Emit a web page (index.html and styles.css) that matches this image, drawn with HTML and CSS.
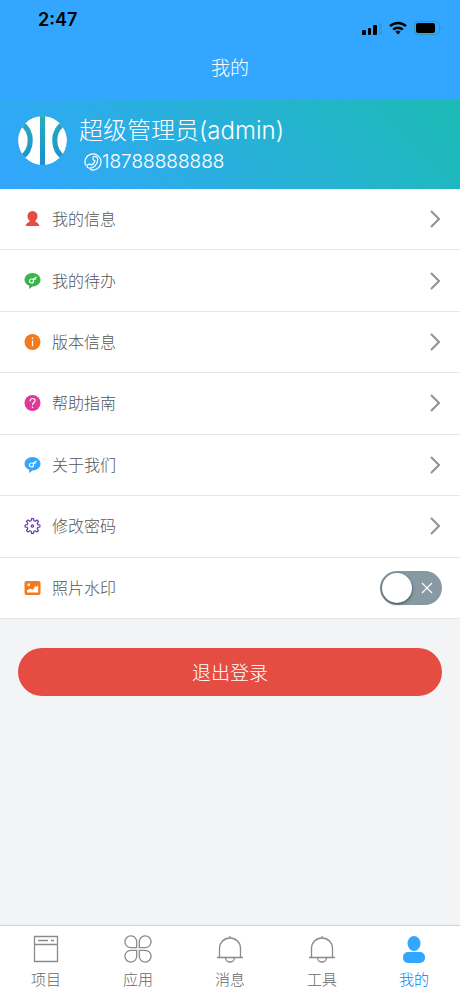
FILE: index.html
```html
<!DOCTYPE html>
<html lang="zh-CN">
<head>
    <meta charset="UTF-8">
    <meta name="viewport" content="width=device-width, initial-scale=1.0">
    <title>我的</title>
    <link rel="stylesheet" href="styles.css">
</head>
<body>
    <header class="header">
        <div class="status-bar">
            <span class="time">2:47</span>
            <div class="status-icons">
                <svg width="20" height="14" viewBox="0 0 20 14">
                    <rect x="0" y="9" width="4" height="5" rx="1"/>
                    <rect x="6" y="7" width="3" height="7" rx="1"/>
                    <rect x="11" y="4" width="4" height="10" rx="1"/>
                    <rect x="17" y="2" width="3" height="12" rx="1" fill="#2f9fd8"/>
                </svg>
                <svg width="18" height="14" viewBox="0 0 18 14" fill="none" stroke="#000" stroke-width="2.5">
                    <path d="M1 5.2a11.5 11.5 0 0 1 16 0"/>
                    <path d="M4.2 8.6a7 7 0 0 1 9.6 0"/>
                    <path d="M6.4 10.8a3.8 3.8 0 0 1 5.2 0L9 13.6z" fill="#000" stroke="none"/>
                </svg>
                <svg width="29" height="14" viewBox="0 0 29 14">
                    <rect x="0.5" y="0.5" width="25" height="13" rx="3.5" fill="none" stroke="#2d98b8"/>
                    <rect x="2" y="2" width="19" height="10" rx="2"/>
                    <path d="M27 5v4c1.500-.5 1.500-3.500 0-4z" fill="#2d98b8"/>
                </svg>
            </div>
        </div>
        <h1 class="title">我的</h1>
    </header>

    <section class="profile">
        <svg class="avatar" viewBox="0 0 48 48">
            <defs>
                <clipPath id="ball"><circle cx="24" cy="24" r="24"/></clipPath>
                <linearGradient id="seam" gradientUnits="userSpaceOnUse" x1="0" y1="0" x2="0" y2="48">
                    <stop offset="0" stop-color="#28adb8"/>
                    <stop offset="1" stop-color="#1790d6"/>
                </linearGradient>
            </defs>
            <g clip-path="url(#ball)">
                <circle cx="24" cy="24" r="24" fill="#fff"/>
                <g fill="none" stroke="url(#seam)" stroke-width="5">
                    <path d="M21.500 0h5v48h-5z" fill="url(#seam)" stroke="none"/>
                    <path d="M3 7c12 8 12 26 0 34"/>
                    <path d="M45 7c-12 8-12 26 0 34"/>
                </g>
            </g>
        </svg>
        <div class="profile-info">
            <p class="name">超级管理员(admin)</p>
            <p class="phone">
                <svg width="18" height="18" viewBox="0 0 18 18" fill="none" stroke="#fff" stroke-width="1.2" stroke-linejoin="round">
                    <path d="M1.800 12.500A8 8 0 1 1 6 16.400"/>
                    <path d="M9.500 3.500c2.500-.6 4.400.8 4.200 3.400-.3 4.400-3.600 8-7.700 8.300-1.800.1-3-.9-3-2.200 0-1 .7-1.500 1.600-1.700l1.300-.2c.8-.1 1.200.4 1.300 1.100 2-.7 3.400-2.500 3.700-4.700-1 .1-1.600-.4-1.800-1.300-.2-1.200-.3-2.400.4-2.700z"/>
                </svg>18788888888
            </p>
        </div>
    </section>

    <main class="main">
        <ul class="menu">
            <li>
                <a class="menu-item" href="#info">
                    <svg class="icon" viewBox="0 0 16 16" fill="#e54d42">
                        <path d="M8 0a5 5 0 0 1 5 5.200c0 2-1 3.700-2.300 4.700.2 1.200 3.800 1.500 4.100 5.100H1.200c.3-3.600 3.900-3.900 4.100-5.100C4 8.900 3 7.200 3 5.200A5 5 0 0 1 8 0z"/>
                    </svg>
                    <span class="label">我的信息</span>
                    <svg class="arrow" viewBox="0 0 10 18"><path d="M1 1l8 8-8 8"/></svg>
                </a>
            </li>
            <li>
                <a class="menu-item" href="#todo">
                    <svg class="icon" viewBox="0 0 16 16">
                        <path d="M8 0c4.500 0 8 3 8 6.800s-3.500 6.700-8 6.700L4.500 16l.2-3.300C1.800 11.600 0 9.500 0 6.800 0 3 3.500 0 8 0z" fill="#39b54a"/>
                        <g fill="none" stroke="#fff" stroke-width="1.200"><circle cx="7" cy="8" r="2"/><path d="M8.400 6.600L12 4M10 5.400l1 1.600"/></g>
                    </svg>
                    <span class="label">我的待办</span>
                    <svg class="arrow" viewBox="0 0 10 18"><path d="M1 1l8 8-8 8"/></svg>
                </a>
            </li>
            <li>
                <a class="menu-item" href="#version">
                    <svg class="icon" viewBox="0 0 16 16">
                        <circle cx="8" cy="8" r="8" fill="#f37b1d"/>
                        <path d="M8 6.500v5.700M8 3.600v1.500" stroke="#fff" stroke-width="1.200"/>
                    </svg>
                    <span class="label">版本信息</span>
                    <svg class="arrow" viewBox="0 0 10 18"><path d="M1 1l8 8-8 8"/></svg>
                </a>
            </li>
            <li>
                <a class="menu-item" href="#help">
                    <svg class="icon" viewBox="0 0 16 16">
                        <circle cx="8" cy="8" r="8" fill="#e03997"/>
                        <path d="M5.600 6.200c0-3.600 5-3.400 5-.6C10.600 7.500 8 7.600 8 10M8 11.600V13" fill="none" stroke="#fff" stroke-width="1.200"/>
                    </svg>
                    <span class="label">帮助指南</span>
                    <svg class="arrow" viewBox="0 0 10 18"><path d="M1 1l8 8-8 8"/></svg>
                </a>
            </li>
            <li>
                <a class="menu-item" href="#about">
                    <svg class="icon" viewBox="0 0 16 16">
                        <path d="M8 0c4.500 0 8 3 8 6.800s-3.500 6.700-8 6.700L4.500 16l.2-3.300C1.800 11.600 0 9.500 0 6.800 0 3 3.500 0 8 0z" fill="#33a6ff"/>
                        <g fill="none" stroke="#fff" stroke-width="1.200"><circle cx="7" cy="8" r="2"/><path d="M8.400 6.600L12 4M10 5.400l1 1.600"/></g>
                    </svg>
                    <span class="label">关于我们</span>
                    <svg class="arrow" viewBox="0 0 10 18"><path d="M1 1l8 8-8 8"/></svg>
                </a>
            </li>
            <li>
                <a class="menu-item" href="#password">
                    <svg class="icon" viewBox="0 0 16 16" fill="none" stroke="#6739b6" stroke-width="1.200" stroke-linejoin="round">
                        <path d="M6.700 2.700L7 .6h2l.3 2.100 1.400.6 1.800-1.300 1.500 1.500-1.300 1.800.6 1.400 2.100.3v2l-2.100.3-.6 1.400 1.300 1.800-1.500 1.500-1.800-1.300-1.400.6-.3 2.100H7l-.3-2.100-1.400-.6L3.500 14 2 12.500l1.300-1.800-.6-1.400L.6 9V7l2.100-.3.6-1.400L2 3.500 3.500 2l1.800 1.300z"/>
                        <circle cx="8" cy="8" r="1.200"/>
                    </svg>
                    <span class="label">修改密码</span>
                    <svg class="arrow" viewBox="0 0 10 18"><path d="M1 1l8 8-8 8"/></svg>
                </a>
            </li>
            <li>
                <label class="menu-item">
                    <svg class="icon" viewBox="0 0 16 16">
                        <rect x="0" y="1" width="16" height="14" rx="2" fill="#f37b1d"/>
                        <circle cx="4.300" cy="4.800" r="1.400" fill="#fff"/>
                        <path d="M2.500 12.500V10.300l3-1.600 3 1 2-3.500 1.500.6 1.700-1.300v7z" fill="#fff"/>
                    </svg>
                    <span class="label">照片水印</span>
                    <input class="switch-input" type="checkbox">
                    <span class="switch">
                        <span class="knob"></span>
                        <svg class="cross" viewBox="0 0 10 10"><path d="M0 0l10 10M10 0L0 10"/></svg>
                    </span>
                </label>
            </li>
        </ul>

        <button class="logout" type="button">退出登录</button>
    </main>

    <nav class="tab-bar">
        <a class="tab" href="#project">
            <svg viewBox="0 0 28 28">
                <path d="M2.500 1.500h23v25h-23zM2.500 9.500h23M6 5.500h10M19 5.500h3"/>
            </svg>
            <span>项目</span>
        </a>
        <a class="tab" href="#apps">
            <svg viewBox="0 0 28 28">
                <path d="M12.700 12.700V7.200a5.900 5.900 0 1 0-5.900 5.500zM15.300 12.700V7.200a5.900 5.900 0 1 1 5.900 5.500zM12.700 15.300v5.500a5.900 5.900 0 1 1-5.900-5.500zM15.300 15.300v5.500a5.900 5.900 0 1 0 5.900-5.500z"/>
            </svg>
            <span>应用</span>
        </a>
        <a class="tab" href="#message">
            <svg viewBox="0 0 28 28">
                <path d="M14 1v2M1 22.500h26M3.500 22.500V13.500a10.500 10.500 0 0 1 21 0v9M9.500 22.500a4.500 4.500 0 0 0 9 0"/>
            </svg>
            <span>消息</span>
        </a>
        <a class="tab" href="#tools">
            <svg viewBox="0 0 28 28">
                <path d="M14 1v2M1 22.500h26M3.500 22.500V13.500a10.500 10.500 0 0 1 21 0v9M9.500 22.500a4.500 4.500 0 0 0 9 0"/>
            </svg>
            <span>工具</span>
        </a>
        <a class="tab active" href="#me">
            <svg viewBox="0 0 28 28">
                <ellipse cx="14" cy="8.500" rx="6.500" ry="7.500"/>
                <rect x="3" y="17" width="22" height="11" rx="5"/>
            </svg>
            <span>我的</span>
        </a>
    </nav>
</body>
</html>
```
FILE: styles.css
```css
* {
    box-sizing: border-box;
}

body {
    display: flex;
    flex-direction: column;
    min-height: 100vh;
    margin: 0;
    background-color: #f2f4f6;
    font-family: Inter, "Noto Sans CJK SC", sans-serif;
    font-weight: 300;
    color: #555;
}

a {
    color: inherit;
    text-decoration: none;
}

.header {
    height: 100px;
    background-color: #33a6ff;
}

.status-bar {
    display: flex;
    justify-content: space-between;
    height: 44px;
    padding: 8px 17px 0 38px;
}

.time {
    font-size: 18px;
    font-weight: 600;
    line-height: 24px;
    color: #000;
}

.status-icons {
    display: flex;
    gap: 7px;
    padding-top: 13px;
}

.title {
    margin: 0;
    font-size: 19px;
    font-weight: 300;
    line-height: 50px;
    text-align: center;
    color: #fff;
}

.profile {
    display: flex;
    align-items: center;
    gap: 12px;
    height: 89px;
    padding: 0 18px;
    background: linear-gradient(45deg, #33a6ff, #1cbbb4);
    color: #fff;
}

.avatar {
    width: 49px;
    height: 49px;
    margin-bottom: 8px;
}

.profile-info p {
    margin: 0;
}

.name {
    font-size: 24px;
    line-height: 34px;
}

.phone {
    display: flex;
    align-items: center;
    padding-left: 5px;
    font-size: 19px;
    line-height: 28px;
}

.main {
    flex: 1;
}

.menu {
    display: grid;
    grid-auto-rows: 1fr;
    min-height: 430px;
    margin: 0;
    padding: 0;
    list-style: none;
    background-color: #fff;
}

.menu li {
    display: grid;
    border-bottom: 1px solid #e6e6e6;
}

.menu-item {
    display: flex;
    align-items: center;
    padding: 0 18px 0 24px;
}

.icon {
    width: 17px;
    height: 16px;
}

.label {
    flex: 1;
    margin-left: 11px;
    font-size: 16px;
    line-height: 24px;
}

.arrow {
    width: 10px;
    height: 18px;
    margin-right: 2px;
    fill: none;
    stroke: #8f9396;
    stroke-width: 2;
}

/* switch */
.switch-input {
    width: 0;
    height: 0;
    margin: 0;
    appearance: none;
}

.switch {
    display: flex;
    align-items: center;
    justify-content: space-between;
    width: 62px;
    height: 34px;
    padding: 0 10px 0 2px;
    border-radius: 17px;
    background-color: #8799a3;
}

.knob {
    width: 30px;
    height: 30px;
    border-radius: 50%;
    background-color: #fff;
    box-shadow: 0 1px 3px rgba(0, 0, 0, 0.6);
}

.cross {
    width: 10px;
    height: 10px;
    overflow: visible;
    stroke: #fff;
    stroke-width: 1.2;
}

.switch-input:checked + .switch {
    flex-direction: row-reverse;
    padding: 0 2px 0 10px;
    background-color: #39b54a;
}

.logout {
    display: block;
    width: calc(100% - 36px);
    height: 48px;
    margin: 29px 18px;
    padding: 0 0 2px;
    border: none;
    border-radius: 24px;
    background-color: #e54d42;
    font-family: inherit;
    font-size: 19px;
    font-weight: 300;
    color: #fff;
    cursor: pointer;
}

.tab-bar {
    display: flex;
    height: 71px;
    padding-top: 9px;
    border-top: 1px solid #d0d2d6;
    background-color: #fff;
}

.tab {
    display: flex;
    flex: 1;
    flex-direction: column;
    align-items: center;
    gap: 6px;
    font-size: 15px;
    line-height: 22px;
    color: #666;
}

.tab svg {
    width: 28px;
    height: 28px;
    fill: none;
    stroke: #8a8a8a;
    stroke-width: 1.3;
}

.tab.active {
    color: #0081ff;
}

.tab.active svg {
    fill: #33a6ff;
    stroke: none;
}
```
